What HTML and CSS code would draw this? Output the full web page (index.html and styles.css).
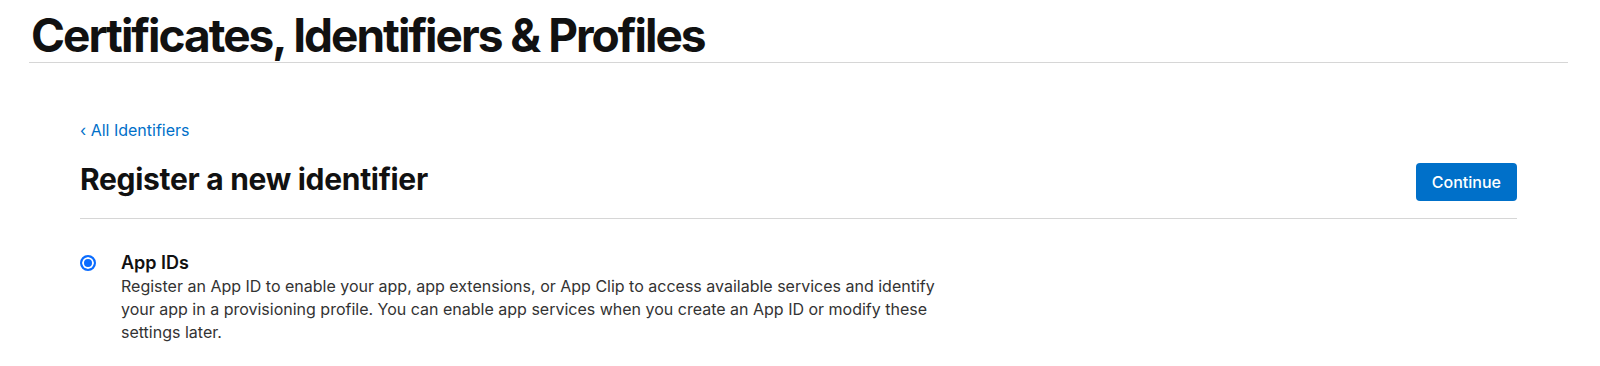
FILE: index.html
```html
<!DOCTYPE html>
<html lang="en">

<head>
    <meta charset="UTF-8">
    <meta
        name="viewport"
        content="width=device-width, initial-scale=1.0"
    >
    <title>Certificates, Identifiers &amp; Profiles</title>
    <link rel="stylesheet" href="styles.css">
</head>

<body>
    <header class="page-header">
        <h1>Certificates, Identifiers &amp; Profiles</h1>
    </header>

    <main class="content">
        <a class="back-link" href="#">&lsaquo; All Identifiers</a>

        <div class="title-row">
            <h2>Register a new identifier</h2>
            <button type="button" class="btn-continue">Continue</button>
        </div>

        <label class="option">
            <input
                type="radio"
                name="identifier"
                checked
            >
            <span class="option-body">
                <span class="option-title">App IDs</span>
                <span class="option-text">Register an App ID to enable your app, app extensions, or App Clip to access available services and identify your app in a provisioning profile. You can enable app services when you create an App ID or modify these settings later.</span>
            </span>
        </label>
    </main>
</body>

</html>
```

FILE: styles.css
```css
body {
    margin: 0;
    padding: 0;
    box-sizing: border-box;
    font-family: Inter, "Noto Sans", sans-serif;
    color: #111111;
    background-color: #ffffff;
}

.page-header {
    margin: 0 32px 0 29px;
    border-bottom: 1px solid #d6d6d6;
}

.page-header h1 {
    margin: 0;
    padding: 12px 0 4px 2px;
    font-size: 46px;
    font-weight: 700;
    letter-spacing: -2px;
    line-height: 46px;
}

.content {
    margin: 0 83px 0 80px;
    padding-top: 57px;
}

.back-link {
    display: inline-block;
    font-size: 16px;
    line-height: 20px;
    color: #0070c9;
    text-decoration: none;
}

.title-row {
    display: flex;
    justify-content: space-between;
    align-items: flex-end;
    padding: 21px 0 17px;
    border-bottom: 1px solid #d6d6d6;
}

.title-row h2 {
    margin: 0 0 4px;
    font-size: 30px;
    line-height: 36px;
    font-weight: 700;
    letter-spacing: -0.3px;
}

.btn-continue {
    border: none;
    border-radius: 4px;
    background-color: #0070c9;
    color: #ffffff;
    font-family: inherit;
    font-size: 16px;
    font-weight: 500;
    padding: 9px 16px;
    cursor: pointer;
}

.option {
    display: flex;
    gap: 25px;
    padding-top: 32px;
    cursor: pointer;
}

.option input {
    appearance: none;
    flex-shrink: 0;
    margin: 4px 0 0;
    width: 16px;
    height: 16px;
    border: 2px solid #0a6cff;
    border-radius: 50%;
    box-sizing: border-box;
    background-color: #ffffff;
}

.option input:checked {
    background-color: #0a6cff;
    box-shadow: inset 0 0 0 2px #ffffff;
}

.option-body {
    display: flex;
    flex-direction: column;
    width: 820px;
}

.option-title {
    font-size: 18px;
    font-weight: 600;
    line-height: 24px;
}

.option-text {
    font-size: 16px;
    line-height: 23px;
    color: #333333;
}
```
